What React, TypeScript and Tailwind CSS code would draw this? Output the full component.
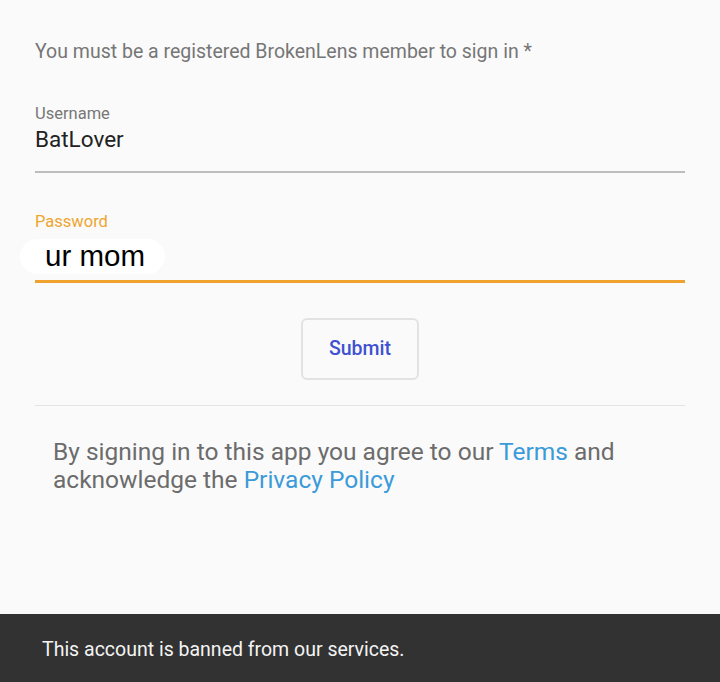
import React from "react";

export default function App() {
  return (
    <div
      className="flex h-[682px] w-[720px] flex-col bg-[#fafafa]"
      style={{ fontFamily: "Roboto, 'Noto Sans', sans-serif" }}
    >
      <div className="px-[35px] pt-[40px]">
        <p className="text-[19.5px] leading-[24px] text-[#767676]">
          You must be a registered BrokenLens member to sign in *
        </p>

        {/* Username field */}
        <div className="mt-[40px]">
          <div className="text-[16.5px] leading-[20px] text-[#777777]">Username</div>
          <div className="mt-[1px] text-[22.5px] leading-[28px] text-[#222222]">BatLover</div>
          <div className="mt-[18px] h-[2px] bg-[#bdbdbd]" />
        </div>

        {/* Password field (focused) */}
        <div className="mt-[39px]">
          <div className="text-[16.5px] leading-[20px] text-[#eea530]">Password</div>
          <div className="mt-[7px] flex">
            <div
              className="-ml-[15px] flex h-[35px] items-center rounded-[18px] bg-white pl-[25px] pr-[20px] text-[29.5px] text-black"
              style={{ fontFamily: "'Liberation Sans', Arial, sans-serif" }}
            >
              ur mom
            </div>
          </div>
          <div className="mt-[6px] h-[3px] bg-[#f0a22e]" />
        </div>

        <div className="mt-[35px] flex justify-center">
          <button className="h-[62px] w-[118px] rounded-[6px] border-2 border-[#e2e2e2] bg-[#fafafa] text-[19.5px] font-medium text-[#3f51d0]">
            Submit
          </button>
        </div>

        <div className="mt-[25px] h-[1px] bg-[#e4e4e4]" />

        <p className="mt-[32px] pl-[18px] text-[24.5px] leading-[28px] text-[#6c6c6c]">
          By signing in to this app you agree to our{" "}
          <span className="text-[#3b9bd8]">Terms</span> and
          <br />
          acknowledge the <span className="text-[#3b9bd8]">Privacy Policy</span>
        </p>
      </div>

      <div className="mt-auto flex h-[68px] items-center bg-[#323232] px-[42px] pt-[4px]">
        <span className="text-[19.5px] text-[#f4f4f4]">This account is banned from our services.</span>
      </div>
    </div>
  );
}
